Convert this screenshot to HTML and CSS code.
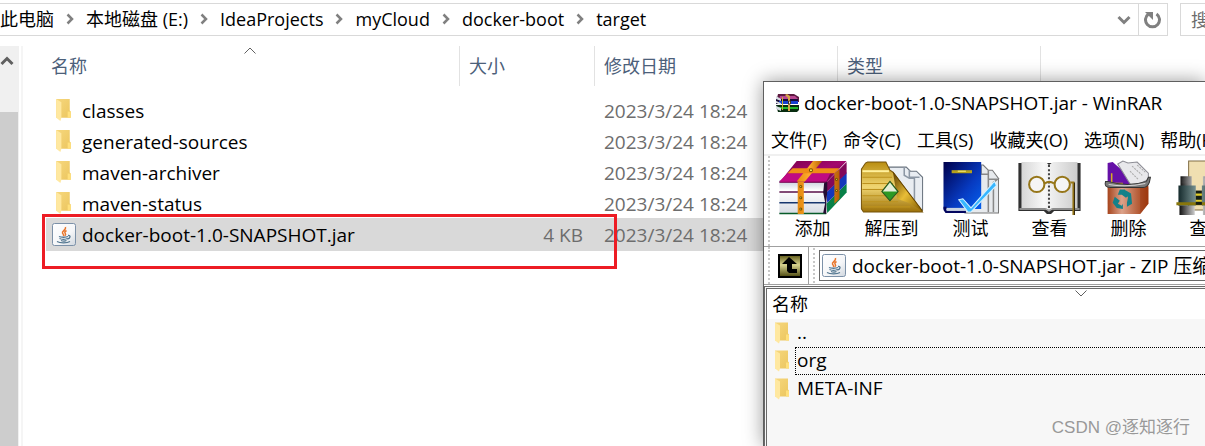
FILE: index.html
```html
<!DOCTYPE html>
<html lang="zh-CN">
<head>
<meta charset="utf-8">
<title>target</title>
<link rel="stylesheet" href="styles.css">
</head>
<body>
<svg class="defs" aria-hidden="true">
  <defs>
    <linearGradient id="gold" x1="0" y1="0" x2="1" y2="1"><stop offset="0" stop-color="#f6d77d"/><stop offset="1" stop-color="#ecc65f"/></linearGradient>
    <linearGradient id="tile" x1="0" y1="0" x2="1" y2="1"><stop offset="0" stop-color="#fff"/><stop offset=".6" stop-color="#f5f6f8"/><stop offset="1" stop-color="#cfd6de"/></linearGradient>
    <linearGradient id="pages" x1="0" y1="0" x2="0" y2="1"><stop offset="0" stop-color="#c3c9d8"/><stop offset=".3" stop-color="#fff"/><stop offset="1" stop-color="#d5dae2"/></linearGradient>
    <linearGradient id="magenta" x1="0" y1="0" x2="1" y2="1"><stop offset="0" stop-color="#7a004c"/><stop offset=".5" stop-color="#a3086d"/><stop offset="1" stop-color="#61003e"/></linearGradient>
    <linearGradient id="orange" x1="0" y1="0" x2="1" y2="0"><stop offset="0" stop-color="#e58a10"/><stop offset=".5" stop-color="#ffae2c"/><stop offset="1" stop-color="#b85f05"/></linearGradient>
    <linearGradient id="brass" x1="0" y1="0" x2="0" y2="1"><stop offset="0" stop-color="#b98d10"/><stop offset=".5" stop-color="#f0d672"/><stop offset="1" stop-color="#9c7008"/></linearGradient>
    <linearGradient id="flap" x1="0" y1="0" x2="1" y2="1"><stop offset="0" stop-color="#5c3c00"/><stop offset=".5" stop-color="#e8bd36"/><stop offset="1" stop-color="#7d5700"/></linearGradient>
    <linearGradient id="blue" x1="0" y1="0" x2="1" y2="1"><stop offset="0" stop-color="#00004a"/><stop offset=".6" stop-color="#073ac0"/><stop offset="1" stop-color="#0560ee"/></linearGradient>
    <linearGradient id="sheet" x1="0" y1="0" x2="1" y2="0"><stop offset="0" stop-color="#d6d6d6"/><stop offset=".4" stop-color="#f8f8f8"/><stop offset="1" stop-color="#cccccc"/></linearGradient>
    <linearGradient id="copper" x1="0" y1="0" x2="1" y2="0"><stop offset="0" stop-color="#a6441c"/><stop offset=".35" stop-color="#dca28a"/><stop offset="1" stop-color="#9e3407"/></linearGradient>
    <linearGradient id="steel" x1="0" y1="0" x2="1" y2="0"><stop offset="0" stop-color="#111"/><stop offset=".45" stop-color="#f2f2f2"/><stop offset="1" stop-color="#111"/></linearGradient>
    <linearGradient id="barrel" x1="0" y1="0" x2="1" y2="0"><stop offset="0" stop-color="#152a2c"/><stop offset=".45" stop-color="#7f9999"/><stop offset="1" stop-color="#152a2c"/></linearGradient>
    <linearGradient id="olive" x1="0" y1="0" x2="0" y2="1"><stop offset="0" stop-color="#5b5614"/><stop offset=".45" stop-color="#d8d38f"/><stop offset="1" stop-color="#49450c"/></linearGradient>
    <symbol id="folder" viewBox="0 0 15 22">
      <path d="M0 0h13v11l1 1v6H0z" fill="url(#gold)"/>
      <path d="M11 12h3v6h-3z" fill="#ffe07c"/>
      <path d="M0 0l5 3v15l-1 3-4-3z" fill="#ffe8a0"/>
    </symbol>
    <symbol id="java" viewBox="0 0 24 23">
      <rect x=".5" y=".5" width="23" height="22" rx="2" fill="url(#tile)" stroke="#7c91a8"/>
      <path d="M13.500 4c1 3-4 4-3 6 .4 1 1.500 1.500 1 3M14.500 7.500c-2 1.200-2 2-1.200 3 .6.8.2 1.700-.5 2.300" fill="none" stroke="#e8762c" stroke-width="1.500"/>
      <path d="M7 13.500c2 1 7 1 9 0M7.500 15.500c2 1 6 1 8 0M9 17.500c2 .7 4 .7 5.500 0M16 12.500c3-.5 2.500 3-.5 3.500M5 18.500c3 1.700 10 1.700 13 0" fill="none" stroke="#50758f" stroke-width="1.300"/>
    </symbol>
    <symbol id="crumb" viewBox="0 0 8 12"><path d="M1.500 1.500L6 6l-4.500 4.500" fill="none" stroke="#808080" stroke-width="2.500"/></symbol>
  </defs>
</svg>

<main class="explorer">
  <header class="topbar">
    <div class="address">
      <nav class="crumbs" aria-label="路径">
        <a href="#">此电脑</a><svg class="sep"><use href="#crumb"/></svg>
        <a href="#">本地磁盘 (E:)</a><svg class="sep"><use href="#crumb"/></svg>
        <a href="#">IdeaProjects</a><svg class="sep"><use href="#crumb"/></svg>
        <a href="#">myCloud</a><svg class="sep"><use href="#crumb"/></svg>
        <a href="#">docker-boot</a><svg class="sep"><use href="#crumb"/></svg>
        <a href="#">target</a>
      </nav>
      <button class="tool" type="button" aria-label="历史记录"><svg width="14" height="10" viewBox="0 0 14 10"><path d="M1.500 2L7 7.500 12.500 2" fill="none" stroke="#808080" stroke-width="3"/></svg></button>
      <button class="tool refresh" type="button" aria-label="刷新"><svg width="18" height="18" viewBox="0 0 18 18"><path d="M12.500 3a7 7 0 1 1-8 0" fill="none" stroke="#808080" stroke-width="3"/><path d="M1 1h8v8z" fill="#808080"/></svg></button>
    </div>
    <input class="search" type="text" aria-label="搜索" placeholder="搜索">
  </header>

  <div class="body">
    <div class="scroll">
      <button class="up" type="button" aria-label="向上滚动"><svg width="14" height="10" viewBox="0 0 14 10"><path d="M1.500 8L7 2.500 12.500 8" fill="none" stroke="#606060" stroke-width="3"/></svg></button>
      <div class="thumb"></div>
    </div>
    <div class="listing">
      <table class="files">
        <thead>
          <tr>
            <th class="name">名称<svg class="sort" width="12" height="7" viewBox="0 0 12 7"><path d="M.5 6.500L6 1l5.500 5.500" fill="none" stroke="#606060"/></svg></th>
            <th class="size">大小</th><th class="date">修改日期</th><th class="type">类型</th><th></th>
          </tr>
        </thead>
        <tbody>
          <tr><td><span class="file"><svg class="icon"><use href="#folder"/></svg>classes</span></td><td></td><td>2023/3/24 18:24</td><td></td><td></td></tr>
          <tr><td><span class="file"><svg class="icon"><use href="#folder"/></svg>generated-sources</span></td><td></td><td>2023/3/24 18:24</td><td></td><td></td></tr>
          <tr><td><span class="file"><svg class="icon"><use href="#folder"/></svg>maven-archiver</span></td><td></td><td>2023/3/24 18:24</td><td></td><td></td></tr>
          <tr><td><span class="file"><svg class="icon"><use href="#folder"/></svg>maven-status</span></td><td></td><td>2023/3/24 18:24</td><td></td><td></td></tr>
          <tr class="selected"><td><span class="file"><svg class="icon"><use href="#java"/></svg>docker-boot-1.0-SNAPSHOT.jar</span></td><td class="amount">4 KB</td><td>2023/3/24 18:24</td><td></td><td></td></tr>
        </tbody>
      </table>
      <div class="marker"></div>
    </div>
  </div>
</main>

<section class="winrar">
  <h1 class="title">
    <svg width="24" height="18" viewBox="0 0 24 18">
      <path d="M3 0h16l5 3v5H1z" fill="#5c1940"/><path d="M5 2h15l3 3H4z" fill="#b74691"/>
      <path d="M1 5h22v5H1z" fill="#170b38"/><path d="M4 7h19v3H4z" fill="#153fd0"/>
      <path d="M1 11h23v5l-2 2H3z" fill="#082c10"/><path d="M4 13h19v2H4z" fill="#21b82d"/>
      <path d="M1 2l5 3v2L1 5zM1 7l5 2v2L1 9zM1 12l5 2v3l-5-2z" fill="#d9dde3"/>
      <path d="M12 0l3 2v15h-2V4l-3-3z" fill="#d7a546"/><path d="M7 3h1v13H7z" fill="#c9b22c"/><path d="M13.500 7h2v3h-2z" fill="#eee" stroke="#432"/>
    </svg>
    docker-boot-1.0-SNAPSHOT.jar - WinRAR
  </h1>
  <nav class="menu">
    <button type="button">文件(F)</button><button type="button">命令(C)</button><button type="button">工具(S)</button><button type="button">收藏夹(O)</button><button type="button">选项(N)</button><button type="button">帮助(H)</button>
  </nav>
  <div class="toolbar">
    <button type="button"><svg viewBox="0 0 66 52">
      <path d="M46 42l20-20v9L47 51z" fill="#078047"/>
      <path d="M46 31l20-20v11L47 41z" fill="#1437bb"/><path d="M46 21L66 1v11L47 30z" fill="#83075a"/>
      <path d="M0 19h46v33H0z" fill="url(#pages)"/><path d="M0 20.500h46M0 30.500h46" stroke="#5a1149" stroke-width="1.500"/><path d="M0 41h46" stroke="#16366e" stroke-width="1.500"/><path d="M0 51.500h46" stroke="#075b28" stroke-width="1.500"/>
      <path d="M44 21l3-1v10l-1 11v11l-3-1 2-10-2-10z" fill="#260c32"/>
      <path d="M17 0h49L46 21H0z" fill="url(#magenta)"/><path d="M0 20L8 12h42l-4 8z" fill="#c00a83"/>
      <path d="M33 0h9L25 20h-8z" fill="url(#orange)"/><path d="M13 7h46l-5 5H8z" fill="#ef8c17"/>
      <path d="M18 20h6v32h-6zM54 12l5-4v29l-5 5z" fill="url(#orange)"/>
      <g fill="#ffef55" stroke="#735100"><circle cx="31" cy="9" r="1.500"/><circle cx="21" cy="25" r="1"/><circle cx="21" cy="36" r="1"/><circle cx="21" cy="47" r="1"/><circle cx="56" cy="18" r="1"/><circle cx="56" cy="29" r="1"/></g>
    </svg>添加</button>
    <button type="button"><svg viewBox="0 0 66 52">
      <path d="M30 6h17l4 4h6l6 6v32H30z" fill="#e9edf2" stroke="#68727d"/><path d="M45 6v8l5 3h5v26M50 9v7h10" fill="none" stroke="#8d98a5" stroke-width="1.500"/>
      <path d="M3 10V8l4-6 2-1h18l4 8 3 2 29 39H5l-2-3z" fill="url(#brass)" stroke="#755309"/>
      <path d="M4 10h26" stroke="#fff09b" stroke-width="2"/><path d="M4 16h29M4 22h30M4 28h22M4 34h24M4 40h35M5 45h46" stroke="#bd921e"/>
      <path d="M34 11l29 38-14-8-11-4z" fill="url(#flap)"/><path d="M34 11l29 38" stroke="#674500"/>
      <path d="M31 20l8 10-8 9-8-9z" fill="#2d9924" stroke="#27521f"/><path d="M31 21l7 9H24z" fill="#e5efd9"/>
    </svg>解压到</button>
    <button type="button"><svg viewBox="0 0 66 52">
      <path d="M30 4h15l5 5h4l6 8v34H27z" fill="#e7eaed" stroke="#777"/><path d="M43 4v9h7v37M50 9v9h9l-4 3v29" fill="none" stroke="#888" stroke-width="1.500"/>
      <path d="M6 1h37v46H6z" fill="url(#blue)"/><path d="M6 45h3v3h19v3H8l-2-3z" fill="#03065f"/><path d="M9 46h20v3H9z" fill="#c8d3e1"/>
      <path d="M14 9h20v3H14z" fill="#b6a11b"/><path d="M20 10h8" stroke="#fff47d"/>
      <path d="M21 38l4-1 8 9L56 20l2 4-25 26h-3z" fill="#37b6ff" stroke="#d5f1ff"/>
    </svg>测试</button>
    <button type="button"><svg viewBox="0 0 66 52">
      <path d="M2 2h61v47H37l-3 3h-4l-3-3H2z" fill="#303030"/>
      <path d="M5 1h24l3 3v44l-4-2H5zM60 1H36l-4 3v44l4-2h24z" fill="url(#sheet)"/>
      <path d="M32 4v44" stroke="#444" stroke-width="2" stroke-dasharray="2 2"/><path d="M3 47h26l3 2 3-2h27" fill="none" stroke="#aaa" stroke-width="1.500"/>
      <g fill="#f5f5f5" stroke="#967619" stroke-width="2"><circle cx="20" cy="23" r="7.500"/><circle cx="45" cy="23" r="7.500"/><path d="M28 22q4-3 9 0M53 21h3v32" fill="none"/></g>
      <path d="M57 21v32" stroke="#33270a"/>
    </svg>查看</button>
    <button type="button"><svg viewBox="0 0 66 52">
      <path d="M12 2l5-1 25 22H12z" fill="#6510a7"/><path d="M16 12v10h11" fill="none" stroke="#d6af22" stroke-width="1.500"/>
      <path d="M22 3l5-3 5 2 9-1 11 11v6L40 24h-5z" fill="#e8e8eb" stroke="#8c8c94"/><path d="M36 5l10 9M41 4l8 7M34 10l8 8" stroke="#aaa" stroke-dasharray="2 1"/>
      <path d="M12 24h40v18l-8 10H12z" fill="url(#copper)"/><path d="M44 26h8v16l-8 10z" fill="#9c3a14" opacity=".5"/>
      <path d="M12 20q20 6 38 0l2-4h2l-1 5q-2 5-6 5H15q-7 0-5-6z" fill="#797979" stroke="#333"/><path d="M13 23q18 3 36-1" fill="none" stroke="#d6d6d6"/>
      <g fill="#148189"><path d="M24 28h5l3 4h3l-5 4-4-3h-4zM30 29l5 3 1 10-5 3v-4l1-5zM19 35l5 4-2 3 4 2 1-2v5l-6-1-4-5z"/></g>
    </svg>删除</button>
    <button type="button"><svg viewBox="0 0 66 52">
      <path d="M14 0h46v48H14z" fill="#f0dfb1" stroke="#806f47"/>
      <path d="M6 15h11v10H6zM28 15h15v10H28z" fill="url(#steel)"/><path d="M4 24h17v20H4zM27 24h18v20H27z" fill="url(#barrel)"/>
      <path d="M7 17h8v5H7zM29 17h13v5H29zM5 44h15v9H5zM28 44h17v9H28z" fill="url(#steel)"/>
      <path d="M2 42h46" stroke="#88760b" stroke-width="3"/><path d="M21 29h6v14h-6z" fill="#151e16"/><path d="M21 33h6M21 39h6" stroke="#e1ce2b" stroke-width="2"/>
    </svg>查找</button>
  </div>
  <div class="pathbar">
    <button class="parent" type="button" aria-label="上一级"><svg width="24" height="24" viewBox="0 0 24 24"><path d="M1 1h22v22H1z" fill="url(#olive)" stroke="#000" stroke-width="2"/><path d="M11 3L4 10h5v7l2 2h8v-4h-5v-5h5z"/></svg></button>
    <div class="archive"><svg class="icon"><use href="#java"/></svg><span>docker-boot-1.0-SNAPSHOT.jar - ZIP 压缩文件</span></div>
  </div>
  <div class="contents">
    <div class="heading">名称<svg class="sort" width="12" height="7" viewBox="0 0 12 7"><path d="M.5.500L6 6 11.500.500" fill="none" stroke="#606060"/></svg></div>
    <ul>
      <li><svg class="icon"><use href="#folder"/></svg><span>..</span></li>
      <li class="focus"><svg class="icon"><use href="#folder"/></svg><span>org</span></li>
      <li><svg class="icon"><use href="#folder"/></svg><span>META-INF</span></li>
    </ul>
  </div>
</section>
<p class="watermark">CSDN @逐知逐行</p>
</body>
</html>
```

FILE: styles.css
```css
* { box-sizing: border-box; }
html, body { height: 100%; }
body {
  margin: 0;
  position: relative;
  overflow: hidden;
  background: #fff;
  color: #000;
  font: 18px/24px "Open Sans", "Noto Sans CJK SC", sans-serif;
}
button, input { font: inherit; color: inherit; }
button { padding: 0; border: 0; background: none; white-space: nowrap; }
svg { display: block; flex: none; }
.defs { position: absolute; width: 0; height: 0; }

.explorer { display: flex; flex-direction: column; height: 100%; overflow: hidden; }
.topbar { display: flex; gap: 12px; padding: 3px 0 10px; }
.address { flex: 1; display: flex; height: 33px; border: 1px solid #d9d9d9; border-left: 0; }
.crumbs { flex: 1; display: flex; align-items: center; gap: 12px; padding-bottom: 1px; white-space: nowrap; }
.crumbs a { color: #000; text-decoration: none; }
.sep { width: 8px; height: 12px; }
.tool { display: grid; place-items: center; width: 28px; }
.refresh { width: 29px; border-left: 1px solid #d9d9d9; }
.search { width: 25px; height: 33px; padding: 0 0 0 10px; border: 1px solid #d9d9d9; border-right: 0; border-radius: 0; background: #fff; }
.search::placeholder { color: #6d6d6d; opacity: 1; }

.body { flex: 1; display: flex; min-height: 0; }
.scroll { width: 19px; display: flex; flex-direction: column; background: #f0f0f0; }
.up { height: 66px; padding: 10px 0 46px; }
.thumb { flex: 1; width: 18px; background: #cdcdcd; }
.listing { flex: 1; position: relative; margin-left: 2px; padding-left: 23px; border-left: 2px solid #f5f5f5; }
.files { width: 100%; table-layout: fixed; border-collapse: separate; border-spacing: 0; color: #6d6d6d; }
.files th { position: relative; height: 40px; padding: 0 0 0 9px; border-right: 1px solid #e2e2e2; text-align: left; font-weight: 400; color: #4c607a; }
.files th:last-child { border-right: 0; }
.files .name { width: 414px; padding-left: 5px; }
.size { width: 135px; }
.date { width: 243px; }
.type { width: 203px; }
.sort { position: absolute; top: 1px; left: 48%; }
.files tbody::before { content: ""; display: block; height: 9px; }
.files td { height: 31px; padding: 0 0 0 9px; font-size: 19px; white-space: nowrap; }
.files td:first-child { padding-left: 6px; color: #000; }
.files .amount { padding-right: 12px; text-align: right; }
.file { display: flex; align-items: center; gap: 6px; }
.icon { width: 24px; height: 23px; }
.selected { background: #d9d9d9; box-shadow: 0 1px #d9d9d9, 0 -1px #d9d9d9; }
.marker { position: absolute; left: 19px; top: 168px; width: 575px; height: 55px; border: 3px solid #ed1c24; }

.winrar {
  position: absolute;
  inset: 81px 0 0 763px;
  display: flex;
  flex-direction: column;
  overflow: hidden;
  background: #fff;
  border: solid #5f5f5f;
  border-width: 1px 0 0 1px;
  box-shadow: 0 0 18px rgba(0, 0, 0, .4);
  white-space: nowrap;
}
.title { display: flex; align-items: center; gap: 5px; height: 42px; margin: 0; padding-left: 11px; font-size: 19px; font-weight: 400; }
.menu { display: flex; align-items: center; gap: 16px; height: 32px; padding: 2px 0 0 7px; border-bottom: 2px solid #f0f0f0; }
.toolbar { display: flex; height: 90px; margin-left: 4px; padding: 5px 0 4px 3px; border-left: 2px dotted #c8c8c8; }
.toolbar button { flex: none; display: flex; flex-direction: column; align-items: center; gap: 2px; width: 79px; }
.toolbar svg { width: 68px; height: 53px; overflow: visible; }
.pathbar { display: flex; height: 39px; border: solid #a0a0a0; border-width: 1px 0; padding-left: 4px; font-size: 19px; }
.parent { width: 41px; padding: 0 0 0 8px; border-left: 2px dotted #c8c8c8; border-right: 1px solid #a0a0a0; }
.archive { position: relative; flex: 1; display: flex; align-items: center; gap: 6px; margin: 3px 0 3px 10px; padding-left: 2px; border: 1px solid #696969; border-right: 0; min-width: 0; }
.archive::before { content: ""; position: absolute; left: -7px; top: -3px; bottom: -3px; border-left: 2px dotted #c8c8c8; }
.contents { flex: 1; margin-top: 1px; border: double #696969; border-width: 3px 0 0 3px; background: #f7f7f7; }
.heading { position: relative; height: 30px; padding: 3px 0 0 5px; background: #fff; }
.heading .sort { left: 308px; }
.contents ul { margin: 0; padding: 0 0 0 8px; list-style: none; }
.contents li { display: flex; align-items: center; height: 28px; font-size: 19px; }
.contents li .icon { width: 15px; margin-right: 5px; }
.contents li span { flex: 1; height: 28px; padding-left: 1px; border: 1px solid transparent; }
.contents .focus span { border: 1px dotted #000; border-right: 0; }

.watermark { position: absolute; right: 15px; bottom: 6px; margin: 0; color: #999; font: 17px/24px "Liberation Sans", "Noto Sans CJK SC", sans-serif; }
```
